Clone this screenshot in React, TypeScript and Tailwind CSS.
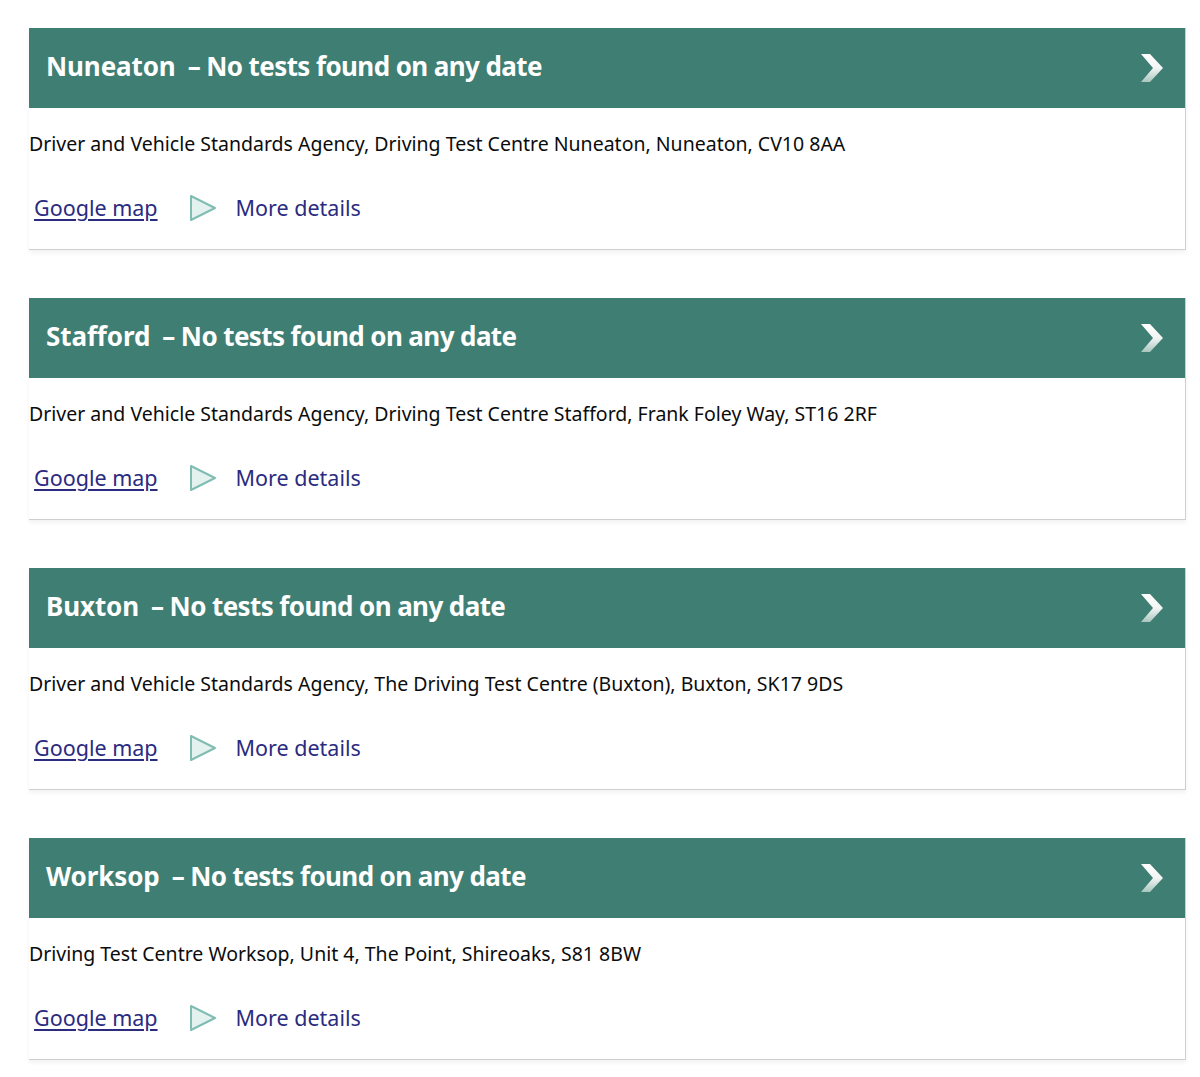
import React from "react";

type Centre = { name: string; address: string };

const centres: Centre[] = [
  {
    name: "Nuneaton",
    address:
      "Driver and Vehicle Standards Agency, Driving Test Centre Nuneaton, Nuneaton, CV10 8AA",
  },
  {
    name: "Stafford",
    address:
      "Driver and Vehicle Standards Agency, Driving Test Centre Stafford, Frank Foley Way, ST16 2RF",
  },
  {
    name: "Buxton",
    address:
      "Driver and Vehicle Standards Agency, The Driving Test Centre (Buxton), Buxton, SK17 9DS",
  },
  {
    name: "Worksop",
    address: "Driving Test Centre Worksop, Unit 4, The Point, Shireoaks, S81 8BW",
  },
];

const Chevron = () => (
  <svg width="26" height="30" viewBox="0 0 26 30">
    <defs>
      <linearGradient id="chev" x1="0" y1="0" x2="0" y2="1">
        <stop offset="0" stopColor="#ffffff" />
        <stop offset="0.5" stopColor="#f2f5f4" />
        <stop offset="1" stopColor="#a9c6bf" />
      </linearGradient>
    </defs>
    <path d="M2 1 L11 1 L24 15 L11 29 L2 29 L14 15 Z" fill="url(#chev)" />
  </svg>
);

const Play = () => (
  <svg width="28" height="28" viewBox="0 0 28 28">
    <path
      d="M2 2 L26 14 L2 26 Z"
      fill="#e3f1ef"
      stroke="#7fbdb3"
      strokeWidth="2"
      strokeLinejoin="round"
    />
  </svg>
);

const CentreCard = ({ centre }: { centre: Centre }) => {
  return (
    <div className="w-[1157px] border-r border-b border-[#cfcfcf] bg-white shadow-[0_3px_4px_rgba(0,0,0,0.05)]">
      <div className="h-20 bg-[#3f7e73] flex items-center justify-between pl-[17px] pr-[20px]">
        <h2 className="text-white font-bold text-[26px] leading-[34px] pb-[5px]">
          <span className="tracking-[-0.1px]">{centre.name}</span>
          <span className="ml-3 tracking-[-0.6px]">– No tests found on any date</span>
        </h2>
        <Chevron />
      </div>
      <div className="pt-[23px] pb-[27px]">
        <p className="text-[19.5px] text-[#0b0c0c] leading-[26px]">{centre.address}</p>
        <div className="mt-[37px] flex items-center pl-[5px] text-[21.5px] leading-[28px]">
          <a href="#" className="text-[#2b2b7f] underline underline-offset-[3px]">
            Google map
          </a>
          <span className="ml-[31px] mr-[19px] flex">
            <Play />
          </span>
          <a href="#" className="text-[#2b2b7f]">
            More details
          </a>
        </div>
      </div>
    </div>
  );
};

export default function App() {
  return (
    <div
      className="min-h-screen bg-white pt-7 pl-[29px] flex flex-col gap-12"
      style={{ fontFamily: '"Noto Sans", Arial, sans-serif' }}
    >
      {centres.map((c) => (
        <CentreCard key={c.name} centre={c} />
      ))}
    </div>
  );
}
